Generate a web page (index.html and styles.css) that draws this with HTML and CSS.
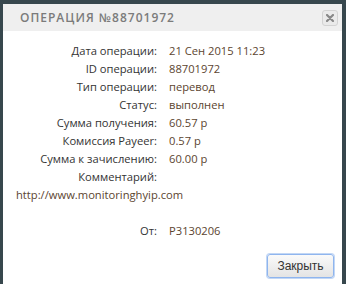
FILE: index.html
```html
<!DOCTYPE html>
<html lang="ru">
<head>
  <meta charset="UTF-8">
  <title>Операция №88701972</title>
  <link rel="stylesheet" href="styles.css">
</head>
<body>
  <div class="dialog">
    <div class="dialog-header">
      <span class="dialog-title">Операция №88701972</span>
      <button class="close-x" type="button" title="Закрыть">
        <svg width="8" height="8" viewBox="0 0 8 8"><path d="M1 1L7 7M7 1L1 7" stroke="#888" stroke-width="2.2" stroke-linecap="round"/></svg>
      </button>
    </div>
    <div class="dialog-body">
      <div class="info">
        <div class="label">Дата операции:</div><div class="value">21 Сен 2015 11:23</div>
        <div class="label">ID операции:</div><div class="value">88701972</div>
        <div class="label">Тип операции:</div><div class="value">перевод</div>
        <div class="label">Статус:</div><div class="value">выполнен</div>
        <div class="label">Сумма получения:</div><div class="value">60.57 р</div>
        <div class="label">Комиссия Payeer:</div><div class="value">0.57 р</div>
        <div class="label">Сумма к зачислению:</div><div class="value">60.00 р</div>
        <div class="label">Комментарий:</div><div class="value"></div>
      </div>
      <div class="comment">http://www.monitoringhyip.com</div>
      <div class="info from">
        <div class="label">От:</div><div class="value">P3130206</div>
      </div>
      <div class="actions">
        <button class="btn" type="button">Закрыть</button>
      </div>
    </div>
  </div>
</body>
</html>
```

FILE: styles.css
```css
body {
  margin: 0;
  background-color: #37474d;
  font-family: "Open Sans", "DejaVu Sans", sans-serif;
  font-size: 11.2px;
  color: #333;
}
.dialog {
  margin: 4px 4px 0 3px;
  width: 339px;
  height: 280px;
  background-color: #fff;
}
.dialog-header {
  height: 27px;
  padding: 0 4px 0 17px;
  background-color: #efefef;
  display: flex;
  align-items: center;
  justify-content: space-between;
}
.dialog-title {
  text-transform: uppercase;
  letter-spacing: 1px;
  font-size: 12px;
  font-weight: 600;
  color: #7b7b7b;
}
.close-x {
  width: 16px;
  height: 16px;
  padding: 0;
  border: 1px solid #d3d3d3;
  border-radius: 3px;
  background-color: #eaeaea;
  display: flex;
  align-items: center;
  justify-content: center;
}
.dialog-body {
  padding: 11px 8px 0 13px;
}
.info {
  display: grid;
  grid-template-columns: 141px auto;
  column-gap: 12px;
  line-height: 18px;
}
.label {
  text-align: right;
  white-space: nowrap;
}
.value {
  color: #5c4530;
}
.comment {
  line-height: 18px;
  color: #5c4530;
}
.from {
  margin-top: 18px;
}
.actions {
  display: flex;
  justify-content: flex-end;
  margin-top: 14px;
}
.btn {
  width: 67px;
  height: 24px;
  font-family: "Liberation Sans", Arial, sans-serif;
  font-size: 12px;
  color: #333;
  border: 1px solid #8fb5ee;
  border-radius: 3px;
  box-shadow: 0 0 0 1px #c2d7f5;
  background: linear-gradient(#fafafa, #e4e4e4);
}
```
